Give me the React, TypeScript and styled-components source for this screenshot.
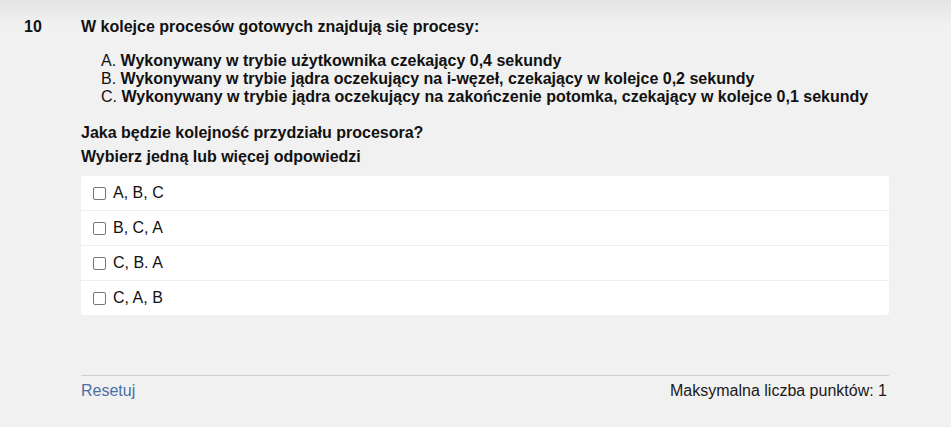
import React from "react";
import styled, { createGlobalStyle } from "styled-components";

const Global = createGlobalStyle`
  html, body { margin: 0; padding: 0; }
  body {
    background: #f1f1f1;
    font-family: "Liberation Sans", Arial, sans-serif;
    color: #111;
  }
`;

const Page = styled.div`
  min-height: 427px;
  box-sizing: border-box;
  background: linear-gradient(to bottom, #e4e4e4 0px, #f1f1f1 26px, #f1f1f1 100%);
  display: grid;
  grid-template-columns: 81px 808px;
  padding-top: 18px;
`;

const Number = styled.div`
  font-weight: bold;
  font-size: 16px;
  line-height: 18px;
  padding-left: 24px;
`;

const Body = styled.div`
  display: flex;
  flex-direction: column;
`;

const Title = styled.div`
  font-weight: bold;
  font-size: 16px;
  line-height: 18px;
`;

const List = styled.ol`
  list-style: none;
  margin: 16px 0 0 0;
  padding: 0 0 0 20px;
`;

const Item = styled.li`
  font-size: 16px;
  line-height: 18px;
`;

const Label = styled.span`
  font-weight: normal;
`;

const Strong = styled.span`
  font-weight: bold;
`;

const Prompt = styled.div`
  margin-top: 15px;
  font-weight: bold;
  font-size: 16px;
  line-height: 24px;
`;

const Card = styled.div`
  margin-top: 7px;
  background: #fff;
  border-radius: 3px;
  display: flex;
  flex-direction: column;
`;

const Row = styled.label`
  height: 34px;
  display: flex;
  align-items: center;
  padding-left: 12px;
  font-size: 16px;
  color: #111;
  & + & {
    border-top: 1px solid #efefef;
  }
`;

const Box = styled.span`
  width: 11px;
  height: 11px;
  border: 1px solid #767676;
  border-radius: 2px;
  background: #fff;
  margin-right: 7px;
  flex: none;
`;

const Footer = styled.div`
  margin-top: 60px;
  border-top: 1px solid #cfcfcf;
  display: flex;
  justify-content: space-between;
  padding-top: 6px;
  font-size: 16px;
  line-height: 18px;
`;

const Reset = styled.a`
  color: #4a6fa5;
  text-decoration: none;
  cursor: pointer;
`;

const Points = styled.span`
  color: #1a1a1a;
  padding-right: 2px;
`;

const items = [
  ["A.", "Wykonywany w trybie użytkownika czekający 0,4 sekundy"],
  ["B.", "Wykonywany w trybie jądra oczekujący na i-węzeł, czekający w kolejce 0,2 sekundy"],
  ["C.", "Wykonywany w trybie jądra oczekujący na zakończenie potomka, czekający w kolejce 0,1 sekundy"],
];

const options = ["A, B, C", "B, C, A", "C, B. A", "C, A, B"];

export default function App() {
  return (
    <>
      <Global />
      <Page>
        <Number>10</Number>
        <Body>
          <Title>W kolejce procesów gotowych znajdują się procesy:</Title>
          <List>
            {items.map(([l, t]) => (
              <Item key={l}>
                <Label>{l}</Label> <Strong>{t}</Strong>
              </Item>
            ))}
          </List>
          <Prompt>
            Jaka będzie kolejność przydziału procesora?
            <br />
            Wybierz jedną lub więcej odpowiedzi
          </Prompt>
          <Card>
            {options.map((o) => (
              <Row key={o}>
                <Box />
                {o}
              </Row>
            ))}
          </Card>
          <Footer>
            <Reset>Resetuj</Reset>
            <Points>Maksymalna liczba punktów: 1</Points>
          </Footer>
        </Body>
      </Page>
    </>
  );
}
